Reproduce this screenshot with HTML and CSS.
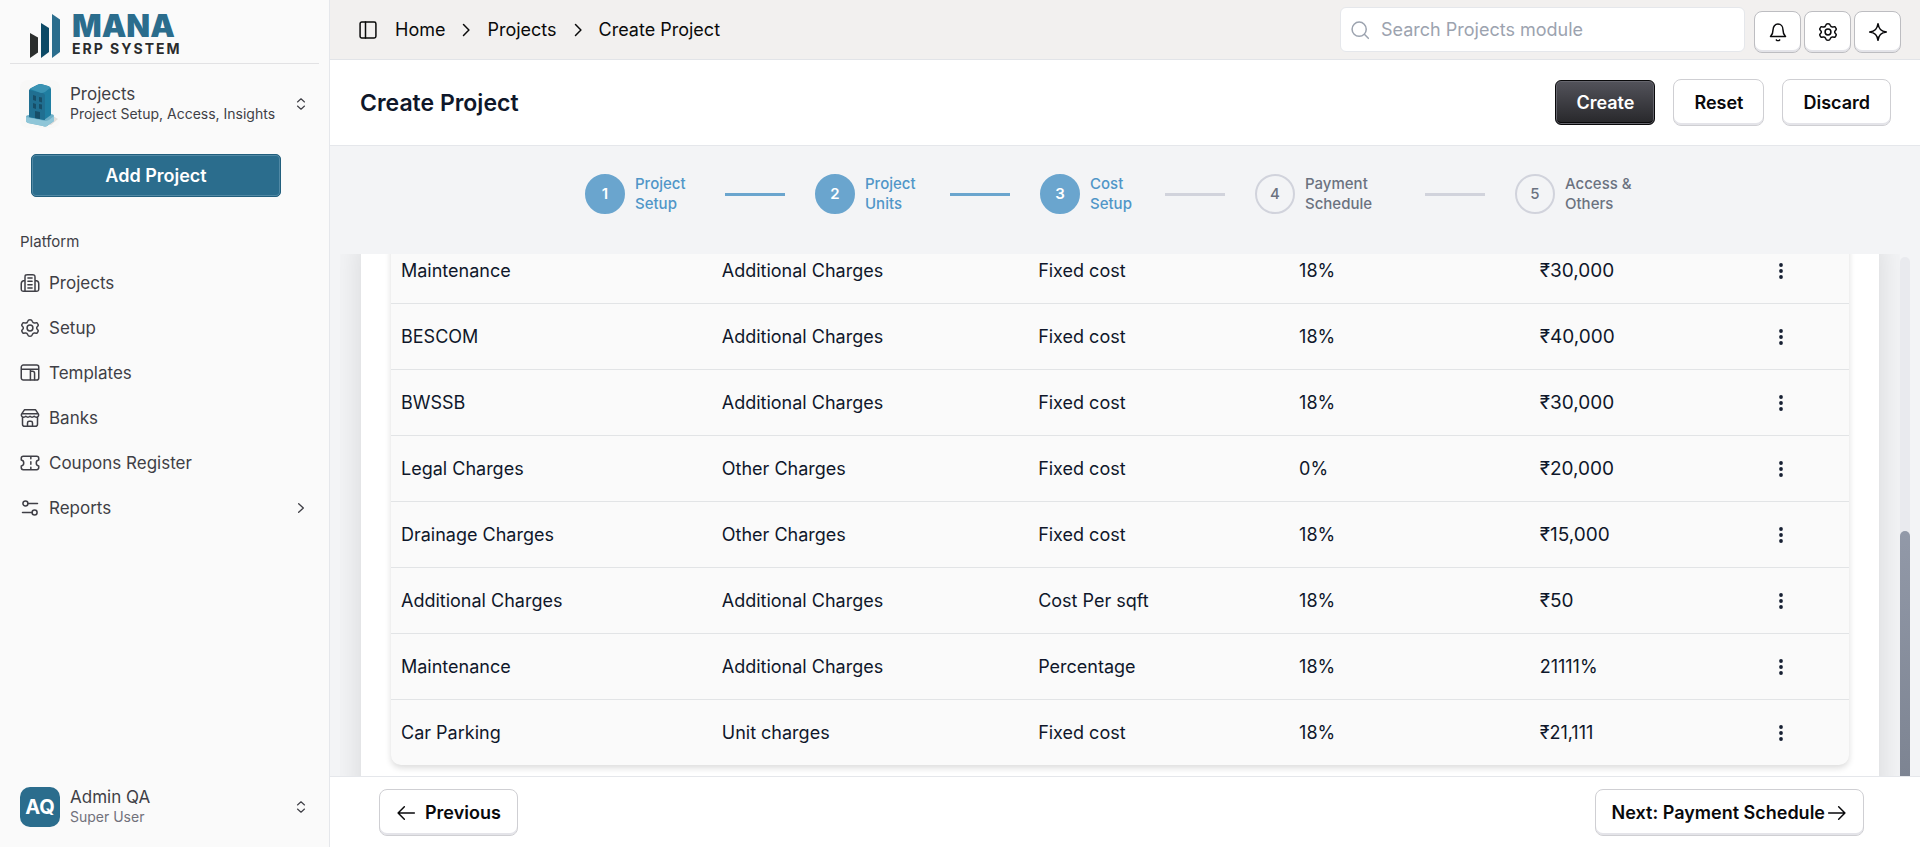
FILE: index.html
```html
<!DOCTYPE html>
<html lang="en">
<head>
<meta charset="utf-8">
<title>Create Project</title>
<link rel="stylesheet" href="styles.css">
</head>
<body>
<div class="app">
  <aside class="sidebar">
    <div class="brand">
      <svg class="brand-mark" width="32" height="46" viewBox="0 0 32 46" aria-hidden="true">
        <path d="M1 19l8 4.500v15L1 44z" fill="#2b2e2d"/><path d="M12 9l8 5v24l-8 6z" fill="#0d4a66"/><path d="M23 0l8 5.500V38l-8 6z" fill="#2b6d8d"/>
      </svg>
      <div class="brand-text"><span class="brand-name">MANA</span><span class="brand-sub">ERP SYSTEM</span></div>
    </div>
    <button class="switcher" type="button">
      <svg class="switcher-pic" width="40" height="48" viewBox="0 0 40 48" aria-hidden="true">
        <rect width="40" height="48" rx="8" fill="#f8f8f7"/>
        <path d="M33 36l5 3-7 6-12-2z" fill="#e2deda"/>
        <path d="M6 37q0-2 3-2l21-1q4 0 4 2v5l-7 5q-2 1-4 0L8 43q-2-1-2-2z" fill="#6fafc6"/>
        <path d="M6 37l19 4q2 0 4-1l5-4v5l-7 5q-2 1-4 0L8 43q-2-1-2-2z" fill="#8fc6d8"/>
        <path d="M9 11q0-2 2-3l6-3q2-1 4-1l7 2q3 1 3 3v26l-7 5L9 37z" fill="#1f7ea1"/>
        <path d="M9 10l13 3q2 0 3 2v25L9 37z" fill="#206f91"/>
        <path d="M10 9l7-4q2-1 4-1l7 2q3 1 2 2l-5 4q-2 1-4 1z" fill="#3a93b3"/>
        <path d="M13 15l3 1v5l-3-1zM19 17l3 .500v5l-3-1zM13 23l3 1v5l-3-1zM19 24l3 .500v5l-3-1zM15 31l5 1v7l-5-1z" fill="#174e68"/>
      </svg>
      <span class="two-line"><span class="line-main">Projects</span><span class="line-sub">Project Setup, Access, Insights</span></span>
      <svg class="icon updown" viewBox="0 0 24 24"><path d="M6 8.500l6-5.500 6 5.500M6 15.500l6 5.500 6-5.500"/></svg>
    </button>
    <button class="add-project" type="button">Add Project</button>
    <h2 class="nav-title">Platform</h2>
    <nav class="nav">
      <a href="#"><svg class="icon" viewBox="0 0 24 24"><path d="M6 22V5c0-2.500.500-3 3-3h6c2.500 0 3 .500 3 3v17M6 9C3 9 1.500 10 1.500 13v6c0 2.500.500 3 3 3h15c2.500 0 3-.500 3-3v-6c0-3-1.500-4-4.500-4M9.500 6h5M9.500 10h5M9.500 14h5M9.500 18h5"/></svg><span>Projects</span></a>
      <a href="#"><svg class="icon" viewBox="0 0 24 24"><use href="#gear"/></svg><span>Setup</span></a>
      <a href="#"><svg class="icon" viewBox="0 0 24 24"><rect x="1.500" y="2.500" width="21" height="18" rx="2.500"/><path d="M2 7.500h20M12.500 7.500V20M12.500 10h2.500c2 0 2.500.500 2.500 2.500V20"/></svg><span>Templates</span></a>
      <a href="#"><svg class="icon" viewBox="0 0 24 24"><path d="M3 11v8.500c0 2 .500 2.500 2.500 2.500h13c2 0 2.500-.500 2.500-2.500V11M5.500 2h13L22 7c1 2 0 4-2.500 4-1.500 0-2.500-1-2.500-1s-1 1-2.500 1S12 10 12 10s-1 1-2.500 1S7 10 7 10s-1 1-2.500 1C2 11 1 9 2 7zM2.500 7h19M9 22v-4c0-1.500.500-2 2-2h2c1.500 0 2 .500 2 2v4"/></svg><span>Banks</span></a>
      <a href="#"><svg class="icon" viewBox="0 0 24 24"><path d="M4 4h16c2 0 2.500.500 2.500 2.500v2c-4 .500-4 6.500 0 7v2c0 2-.500 2.500-2.500 2.500H4c-2 0-2.500-.500-2.500-2.500v-2c4-.500 4-6.500 0-7v-2C1.500 4.500 2 4 4 4zM13 4v3M13 10.500v3M13 17v3"/></svg><span>Coupons Register</span></a>
      <a href="#"><svg class="icon" viewBox="0 0 24 24"><circle cx="6.500" cy="6.500" r="3"/><circle cx="17.500" cy="17.500" r="3"/><path d="M9.500 6.500H21M3 17.500h11.500"/></svg><span>Reports</span><svg class="icon chevron" viewBox="0 0 24 24"><path d="M8.500 5.500L15.500 12l-7 6.500"/></svg></a>
    </nav>
    <button class="switcher user" type="button">
      <span class="avatar">AQ</span>
      <span class="two-line"><span class="line-main">Admin QA</span><span class="line-sub muted">Super User</span></span>
      <svg class="icon updown" viewBox="0 0 24 24"><path d="M6 8.500l6-5.500 6 5.500M6 15.500l6 5.500 6-5.500"/></svg>
    </button>
  </aside>

  <div class="main">
    <header class="topbar">
      <button class="plain" type="button" aria-label="Toggle sidebar"><svg class="icon" viewBox="0 0 24 24"><rect x="2.500" y="2.500" width="19" height="19" rx="2"/><path d="M9 2.500v19"/></svg></button>
      <nav class="crumbs" aria-label="Breadcrumb">
        <a href="#">Home</a>
        <svg class="icon" viewBox="0 0 24 24"><path d="M9 5.500l6.500 6.500L9 18.500"/></svg>
        <a href="#">Projects</a>
        <svg class="icon" viewBox="0 0 24 24"><path d="M9 5.500l6.500 6.500L9 18.500"/></svg>
        <a href="#">Create Project</a>
      </nav>
      <label class="search">
        <svg class="icon" viewBox="0 0 24 24"><circle cx="11" cy="11" r="8.500"/><path d="M17.500 17.500L22 22"/></svg>
        <input type="search" placeholder="Search Projects module" aria-label="Search Projects module">
      </label>
      <div class="tools">
        <button class="btn tool" type="button" aria-label="Notifications"><svg class="icon" viewBox="0 0 24 24"><path d="M3 17.500c1.500-1.500 3-3.500 3-8 0-4 2.500-7 6-7s6 3 6 7c0 4.500 1.500 6.500 3 8zM10 21.500c1 1 3 1 4 0"/></svg></button>
        <button class="btn tool" type="button" aria-label="Settings"><svg class="icon" viewBox="0 0 24 24"><use href="#gear"/></svg></button>
        <button class="btn tool" type="button" aria-label="Assistant"><svg class="icon" viewBox="0 0 24 24"><path d="M12 2c1 6.500 3.500 9 10 10-6.500 1-9 3.500-10 10-1-6.500-3.500-9-10-10 6.500-1 9-3.500 10-10z"/></svg></button>
      </div>
    </header>

    <div class="titlebar">
      <h1>Create Project</h1>
      <div class="actions">
        <button class="btn primary" type="submit">Create</button>
        <button class="btn" type="reset">Reset</button>
        <button class="btn" type="button">Discard</button>
      </div>
    </div>

    <ol class="stepper">
      <li class="step done"><span class="dot">1</span><span class="label">Project<br>Setup</span></li>
      <li class="bar done"></li>
      <li class="step done"><span class="dot">2</span><span class="label w-units">Project<br>Units</span></li>
      <li class="bar done"></li>
      <li class="step done"><span class="dot">3</span><span class="label w-cost">Cost<br>Setup</span></li>
      <li class="bar"></li>
      <li class="step"><span class="dot">4</span><span class="label w-payment">Payment<br>Schedule</span></li>
      <li class="bar"></li>
      <li class="step"><span class="dot">5</span><span class="label w-access">Access &amp;<br>Others</span></li>
    </ol>

    <div class="scroller">
      <div class="viewport">
        <div class="card">
          <table class="charges">
            <colgroup><col class="c-name"><col class="c-type"><col class="c-method"><col class="c-tax"><col class="c-amount"><col></colgroup>
            <tbody>
              <tr><td>Maintenance</td><td>Additional Charges</td><td>Fixed cost</td><td>18%</td><td class="amount">₹30,000</td><td><button class="plain" type="button" aria-label="Row menu"><svg class="dots" viewBox="0 0 20 20"><use href="#dots"/></svg></button></td></tr>
              <tr><td>BESCOM</td><td>Additional Charges</td><td>Fixed cost</td><td>18%</td><td class="amount">₹40,000</td><td><button class="plain" type="button" aria-label="Row menu"><svg class="dots" viewBox="0 0 20 20"><use href="#dots"/></svg></button></td></tr>
              <tr><td>BWSSB</td><td>Additional Charges</td><td>Fixed cost</td><td>18%</td><td class="amount">₹30,000</td><td><button class="plain" type="button" aria-label="Row menu"><svg class="dots" viewBox="0 0 20 20"><use href="#dots"/></svg></button></td></tr>
              <tr><td>Legal Charges</td><td>Other Charges</td><td>Fixed cost</td><td>0%</td><td class="amount">₹20,000</td><td><button class="plain" type="button" aria-label="Row menu"><svg class="dots" viewBox="0 0 20 20"><use href="#dots"/></svg></button></td></tr>
              <tr><td>Drainage Charges</td><td>Other Charges</td><td>Fixed cost</td><td>18%</td><td class="amount">₹15,000</td><td><button class="plain" type="button" aria-label="Row menu"><svg class="dots" viewBox="0 0 20 20"><use href="#dots"/></svg></button></td></tr>
              <tr><td>Additional Charges</td><td>Additional Charges</td><td>Cost Per sqft</td><td>18%</td><td class="amount">₹50</td><td><button class="plain" type="button" aria-label="Row menu"><svg class="dots" viewBox="0 0 20 20"><use href="#dots"/></svg></button></td></tr>
              <tr><td>Maintenance</td><td>Additional Charges</td><td>Percentage</td><td>18%</td><td>21111%</td><td><button class="plain" type="button" aria-label="Row menu"><svg class="dots" viewBox="0 0 20 20"><use href="#dots"/></svg></button></td></tr>
              <tr><td>Car Parking</td><td>Unit charges</td><td>Fixed cost</td><td>18%</td><td>₹21,111</td><td><button class="plain" type="button" aria-label="Row menu"><svg class="dots" viewBox="0 0 20 20"><use href="#dots"/></svg></button></td></tr>
            </tbody>
          </table>
        </div>
      </div>
      <div class="track"><div class="thumb"></div></div>
    </div>

    <footer class="footer">
      <button class="btn prev" type="button"><svg class="icon" viewBox="0 0 24 24"><path d="M22 12H2.500M10 4.500L2.500 12l7.500 7.500"/></svg>Previous</button>
      <button class="btn next" type="button">Next: Payment Schedule<svg class="icon" viewBox="0 0 24 24"><path d="M2 12h19.500M14 4.500l7.500 7.500-7.500 7.500"/></svg></button>
    </footer>
  </div>
</div>
<svg class="defs" aria-hidden="true">
  <symbol id="gear" viewBox="0 0 24 24"><circle cx="12" cy="12" r="3.500"/><path d="M21.300 7.100c-.500-.900-.700-1.300-1.200-1.500-.400-.100-.900 0-1.700.300-1.700.500-3-.300-3.600-1.800-.500-1.800-.900-2.100-2.800-2.100s-2.300.300-2.800 2.100C8.700 5.600 7.300 6.400 5.600 5.900c-.800-.300-1.300-.400-1.700-.300-.500.200-.700.600-1.200 1.500-.500.800-.700 1.300-.600 1.700.100.400.400.700 1 1.300 1.200 1.200 1.200 2.600 0 3.800-.600.600-.900.900-1 1.300-.100.400.100.900.600 1.700.500.900.700 1.300 1.200 1.500.400.100.900 0 1.700-.300 1.700-.500 3.100.300 3.600 1.800.500 1.800.900 2.100 2.800 2.100s2.300-.300 2.800-2.100c.600-1.500 1.900-2.300 3.600-1.800.800.300 1.300.400 1.700.300.500-.200.700-.600 1.200-1.500.500-.800.700-1.300.600-1.700-.100-.400-.400-.700-1-1.300-1.200-1.200-1.200-2.600 0-3.800.600-.600.900-.900 1-1.300.100-.400-.100-.900-.600-1.700z"/></symbol>
  <symbol id="dots" viewBox="0 0 20 20"><circle cx="10" cy="4" r="1.900"/><circle cx="10" cy="10" r="1.900"/><circle cx="10" cy="16" r="1.900"/></symbol>
</svg>
</body>
</html>
```
FILE: styles.css
```css
* { box-sizing: border-box; }
body { margin: 0; font: 18px/24px Inter, "Noto Sans", sans-serif; color: #0f172a; }
button, input { font: inherit; color: inherit; }
a { color: inherit; text-decoration: none; }
.defs { display: none; }
.icon { width: 20px; height: 20px; flex: none; fill: none; stroke: currentColor; stroke-width: 1.8; stroke-linecap: round; stroke-linejoin: round; }
.plain { display: inline-flex; padding: 0; border: 0; background: none; }

.app { display: flex; height: 100vh; overflow: hidden; }
.sidebar { flex: 0 0 330px; display: flex; flex-direction: column; padding: 0 10px 16px; background: #fafafa; border-right: 1px solid #e5e7eb; color: #3f3f46; }
.brand { display: flex; gap: 11px; height: 64px; padding: 14px 0 0 19px; border-bottom: 1px solid #e2e2e4; }
.brand-text { display: flex; flex-direction: column; gap: 3px; }
.brand-name { font-size: 31px; line-height: 24px; font-weight: 900; color: #2b6d8d; }
.brand-sub { font-size: 14px; line-height: 16px; font-weight: 700; letter-spacing: 2px; color: #292b2c; }
.switcher { display: flex; align-items: center; gap: 10px; padding: 0 10px; border: 0; background: none; text-align: left; }
.brand + .switcher { margin-top: 16px; }
.switcher-pic { flex: none; }
.two-line { display: flex; flex-direction: column; flex: 1; white-space: nowrap; }
.line-main { font-size: 17px; line-height: 20px; }
.line-sub { font-size: 14px; line-height: 20px; }
.muted { color: #71717a; }
.updown { width: 14px; height: 14px; margin-right: 1px; stroke-width: 2; }
.add-project { height: 43px; margin: 26px 38px 0 21px; border: 1px solid #225f7d; border-radius: 5px; background: #2b6d8d; box-shadow: inset 0 0 0 1px #5189a5; color: #fff; font-weight: 600; }
.nav-title { margin: 33px 10px 6px; font-size: 15px; line-height: 24px; font-weight: 400; }
.nav a { display: flex; align-items: center; gap: 9px; height: 45px; padding: 0 10px; font-size: 17px; }
.chevron { width: 16px; height: 16px; margin-left: auto; stroke-width: 2; }
.user { margin-top: auto; padding: 4px 10px; }
.avatar { display: grid; place-items: center; width: 40px; height: 40px; border-radius: 10px; background: #2b6d8d; color: #fff; font-size: 20px; font-weight: 700; }

.main { flex: 1; min-width: 0; display: flex; flex-direction: column; background: #f3f4f6; }
.topbar { display: flex; align-items: center; height: 60px; padding: 0 19px 0 28px; background: #f2f0ef; border-bottom: 1px solid #e2e4e8; color: #0a0a0a; }
.crumbs { display: flex; align-items: center; gap: 11px; margin-left: 17px; }
.search { display: flex; align-items: center; gap: 11px; width: 405px; height: 45px; margin: 0 9px 0 auto; padding: 0 9px; background: #fff; border: 1px solid #e5e7eb; border-radius: 6px; color: #9ca3af; }
.search input { flex: 1; min-width: 0; padding: 0; border: 0; outline: 0; background: none; }
.search input::placeholder { color: #9ca3af; opacity: 1; }
.tools { display: flex; gap: 3px; margin-top: 4px; }
.btn { display: flex; align-items: center; justify-content: center; height: 47px; padding: 0 20px; border: 1px solid #cfcfd3; border-radius: 8px; background: #fff; box-shadow: inset 0 -2px 0 #e4e4e9; color: #09090b; font-weight: 600; }
.tool { width: 47px; height: 42px; padding: 0; border-color: #bdbdc1; }
.titlebar { display: flex; align-items: center; justify-content: space-between; height: 86px; padding: 0 29px 0 30px; background: #fff; border-bottom: 1px solid #e5e7eb; }
.titlebar h1 { margin: 0; font-size: 23px; line-height: 32px; font-weight: 600; }
.actions { display: flex; align-items: center; gap: 18px; }
.primary { height: 45px; border-color: #09090b; border-radius: 6px; background: linear-gradient(#53535b, #27272a); box-shadow: inset 0 0 0 1px #65656d, inset 0 -2px 0 #09090b; color: #fff; }

.stepper { display: flex; justify-content: center; align-items: center; gap: 30px; height: 108px; margin: 0; padding: 0 0 12px; list-style: none; }
.step { display: flex; align-items: center; gap: 10px; color: #6b7280; }
.dot { display: grid; place-items: center; width: 40px; height: 40px; border: 2px solid #d1d3dc; border-radius: 50%; font-size: 15px; font-weight: 500; }
.label { width: 60px; font-size: 15px; line-height: 20px; font-weight: 500; white-space: nowrap; }
.w-units { width: 55px; }
.w-cost { width: 45px; }
.w-payment { width: 90px; }
.w-access { width: 100px; }
.step.done { color: #5096c8; }
.done .dot { border-color: #6aa5ce; background: #6aa5ce; color: #fff; font-weight: 600; }
.bar { width: 60px; height: 3px; background: #d1d3dc; }
.bar.done { background: #6aa5ce; }

.scroller { flex: 1; min-height: 0; display: flex; margin: 0 10px; overflow: hidden; }
.viewport { flex: 1; padding: 0 21px; overflow: hidden; }
.card { margin-top: -16px; padding: 0 30px 40px; background: #fff; box-shadow: 0 0 30px rgba(0, 0, 0, .12); }
.charges { width: 100%; table-layout: fixed; border-collapse: separate; border-spacing: 0; border-radius: 10px; background: #fafafa; box-shadow: 0 3px 6px rgba(0, 0, 0, .14); }
.charges td { height: 66px; padding: 0 10px; border-bottom: 1px solid #e2e4e6; }
.charges tr:last-child td { height: 65px; border-bottom: 0; }
.charges td .plain { display: flex; }
.charges .amount { font-size: 19px; }
.c-name { width: 22%; }
.c-type { width: 21.700%; }
.c-method { width: 17.900%; }
.c-tax { width: 16.500%; }
.c-amount { width: 15.900%; }
.dots { width: 20px; height: 20px; fill: #172033; }
.track { width: 10px; margin-top: 3px; border-radius: 5px 5px 0 0; background: #e9eaee; }
.thumb { height: 47.200%; margin-top: 274px; border-radius: 5px 5px 0 0; background: linear-gradient(#9299a8, #7d8492); }
.footer { display: flex; align-items: center; justify-content: space-between; height: 71px; padding: 1px 56px 0 49px; background: #fff; border-top: 1px solid #e5e7eb; }
.prev { gap: 9px; padding: 0 16px; }
.next { padding: 0 16px; gap: 2px; }
```
